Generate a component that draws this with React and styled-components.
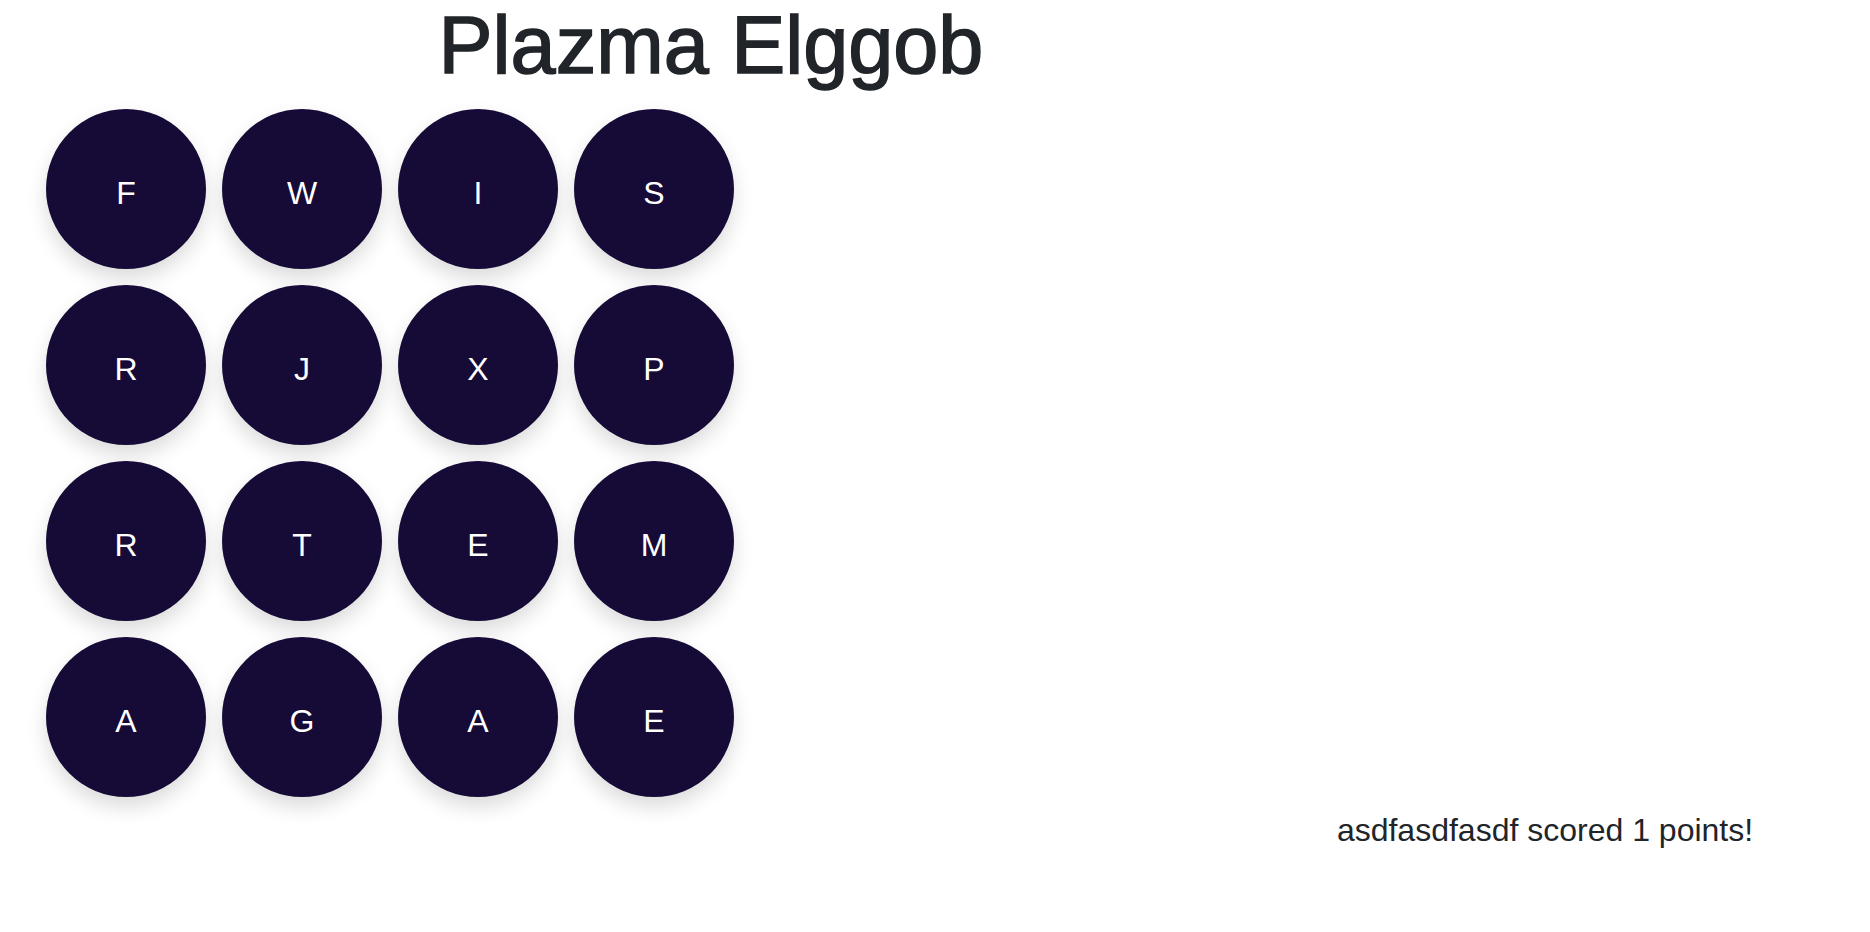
import styled, { createGlobalStyle } from 'styled-components';

const GlobalStyle = createGlobalStyle`
    body {
        margin: 0;
        background: #ffffff;
        color: #212529;
        font-family: "Liberation Sans", Arial, sans-serif;
    }
`

const Page = styled.div`
    display: flex;
    flex-direction: column;
    min-height: 100vh;
`

const Header = styled.header`
    width: 1422px;
    text-align: center;
`

const Title = styled.h1`
    margin: 0;
    font-size: 81px;
    font-weight: 400;
    line-height: 1.12;
    color: #212529;
    -webkit-text-stroke: 1.5px #212529;
`

const Board = styled.div`
    display: grid;
    grid-template-columns: repeat(4, 160px);
    grid-auto-rows: 160px;
    gap: 16px;
    padding: 18px 0 0 46px;
`

const Die = styled.button`
    display: flex;
    align-items: center;
    justify-content: center;
    width: 160px;
    height: 160px;
    padding: 8px 0 0;
    border: none;
    border-radius: 50%;
    background-color: #160a37;
    color: #ffffff;
    font-family: "Liberation Sans", Arial, sans-serif;
    font-size: 32px;
    line-height: 1.2;
    box-shadow: 0 10px 20px rgba(0, 0, 0, 0.14);
    cursor: pointer;
`

const Footer = styled.footer`
    display: grid;
    grid-template-columns: 1fr 650px;
    margin-top: 9px;
`

const Score = styled.p`
    grid-column: 2;
    margin: 0;
    text-align: center;
    font-size: 32px;
    line-height: 1.5;
`

const letters = [
    'F', 'W', 'I', 'S',
    'R', 'J', 'X', 'P',
    'R', 'T', 'E', 'M',
    'A', 'G', 'A', 'E',
];

function App() {
    return (
        <Page>
            <GlobalStyle />
            <Header>
                <Title>Plazma Elggob</Title>
            </Header>
            <Board>
                {letters.map((letter, i) => (
                    <Die key={i}>{letter}</Die>
                ))}
            </Board>
            <Footer>
                <Score>asdfasdfasdf scored 1 points!</Score>
            </Footer>
        </Page>
    );
}

export default App;
